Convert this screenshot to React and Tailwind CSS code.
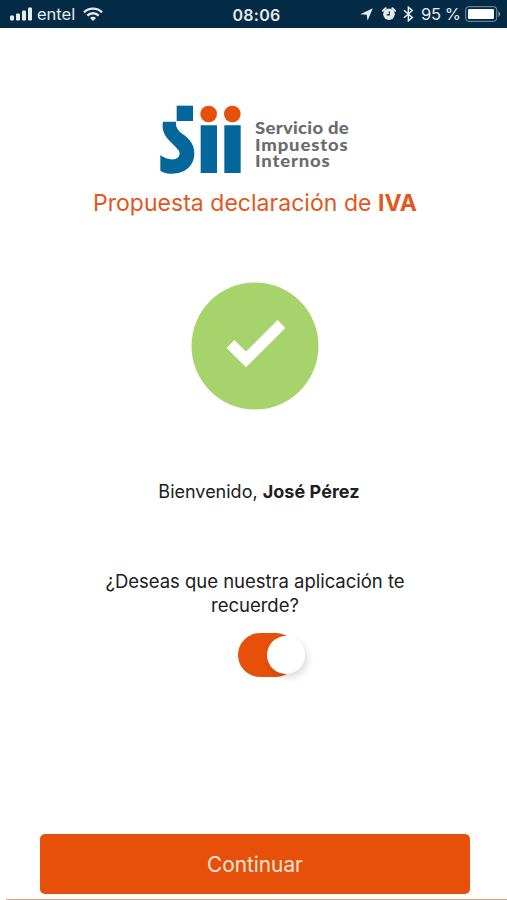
import React, { useState } from "react";

function StatusBar() {
  return (
    <header className="grid h-7 shrink-0 grid-cols-3 items-center bg-[#032b46] text-white/90">
      <div className="flex items-center pl-[10px]">
        <svg width="23" height="14" viewBox="0 0 23 14" fill="currentColor">
          <rect x="0" y="8.5" width="4" height="5" rx="1" />
          <rect x="6" y="6.5" width="4" height="7" rx="1" />
          <rect x="12" y="3.5" width="4" height="10" rx="1" />
          <rect x="18" y="0.5" width="4" height="13" rx="1" />
        </svg>
        <span className="mt-px ml-[4px] text-[16.5px] leading-none">entel</span>
        <svg className="ml-[8px]" width="20" height="15" viewBox="0 0 20 15" fill="none" stroke="currentColor" strokeWidth="2.4">
          <path d="M1 5.3C6 .4 14 .4 19 5.3" />
          <path d="M4.3 8.6c3.2-3.1 8.2-3.1 11.4 0" />
          <path d="M7 10.9c1.7-1.5 4.3-1.5 6 0L10 14z" fill="currentColor" stroke="none" />
        </svg>
      </div>

      <span className="mt-px pl-[6px] text-center text-[16px] font-semibold leading-none tracking-[0.3px]">08:06</span>

      <div className="flex items-center justify-end pr-[6px]">
        <svg width="13" height="13" viewBox="0 0 13 13" fill="currentColor">
          <path d="M12.8.3 7.6 12.7 6.7 6.8.3 6.2z" />
        </svg>
        <svg className="ml-[9px]" width="14" height="14" viewBox="0 0 14 14">
          <path d="M1 3.8 3.6 1.3M13 3.8l-2.6-2.5" stroke="currentColor" strokeWidth="2" strokeLinecap="round" />
          <circle cx="7" cy="7.2" r="5.8" fill="currentColor" />
          <path d="M7.3 4.3v3.6H4.7" fill="none" stroke="#032b46" strokeWidth="1.1" />
        </svg>
        <svg className="ml-[7px]" width="11" height="16" viewBox="0 0 11 16" fill="none" stroke="currentColor" strokeWidth="1.5">
          <path d="m1 4.3 8.3 7.2-3.9 3.3V1.2l3.9 3.3L1 11.7" />
        </svg>
        <span className="mt-px ml-[7px] whitespace-nowrap text-[16.5px] leading-none [word-spacing:-1px]">95 %</span>
        <svg className="ml-[4px]" width="36" height="16" viewBox="0 0 36 16">
          <rect x=".7" y=".7" width="31" height="14.6" rx="3" fill="none" stroke="currentColor" strokeOpacity=".55" />
          <rect x="3" y="3" width="26" height="10" rx="1.2" fill="white" />
          <path d="M33.4 5.2c2.2 1 2.2 4.6 0 5.6z" fill="currentColor" fillOpacity=".6" />
        </svg>
      </div>
    </header>
  );
}

function Logo() {
  return (
    <div className="flex h-[70px] w-[190px]">
      <svg className="shrink-0" width="82" height="70" viewBox="30 30 246 210">
        <g fill="#03679b">
          <path d="M80 32h49v46H80z" />
          <path d="M39 80h39c-1 16 4 25 20 37 20 14 35 31 35 58 0 42-34 64-73 61-11-1-21-4-29-9v-46c12 8 27 14 42 12 13-2 20-15 13-27C73 146 30 125 39 80z" />
          <path d="M152 91h49v143h-49zM223 91h49v143h-49z" />
        </g>
        <circle cx="176" cy="57" r="25" fill="#e6500b" />
        <circle cx="247" cy="57" r="25" fill="#e6500b" />
      </svg>
      <div className="mt-[15px] ml-[13px] flex origin-left scale-x-[1.12] flex-col whitespace-nowrap font-['Lato','Open_Sans',sans-serif] text-[16.5px] font-black leading-[16.7px] text-[#6b6c6f]">
        <span className="tracking-[0.25px]">Servicio de</span>
        <span className="tracking-[0.75px]">Impuestos</span>
        <span className="tracking-[0.75px]">Internos</span>
      </div>
    </div>
  );
}

export default function App() {
  const [remember, setRemember] = useState(true);

  return (
    <div className="flex h-[900px] w-[507px] flex-col overflow-hidden bg-white font-['Inter','Liberation_Sans',sans-serif] text-[#202022]">
      <StatusBar />

      <main className="flex flex-1 flex-col items-center">
        <div className="mt-[77px] ml-[3px]">
          <Logo />
        </div>
        <h1 className="mt-[12px] ml-[3px] whitespace-nowrap text-[23px] leading-8 tracking-[0.03px] text-[#e2571b]">
          Propuesta declaración de <b className="font-bold">IVA</b>
        </h1>

        <svg className="mt-[63px] ml-[3px]" width="128" height="128" viewBox="0 0 128 128">
          <circle cx="64" cy="64" r="63.5" fill="#a6d36c" />
          <path d="m39.5 62 15.5 15.5 35.5-35.5" fill="none" stroke="white" strokeWidth="11" />
        </svg>

        <p className="mt-[70px] ml-[11px] whitespace-nowrap text-[18px] leading-6">
          Bienvenido, <b className="font-bold tracking-[0.05px]">José Pérez</b>
        </p>
        <p className="mt-[65px] ml-[3px] text-center text-[18.5px] leading-6 tracking-[-0.02px]">
          ¿Deseas que nuestra aplicación te
          <br />
          recuerde?
        </p>

        {/* Remember me switch */}
        <button
          type="button"
          role="switch"
          aria-checked={remember}
          aria-label="Recordar"
          onClick={() => setRemember(!remember)}
          className={`mt-[16px] ml-[29px] flex h-[44px] w-[60px] items-center rounded-full ${
            remember ? "justify-end bg-[#e6500b]" : "justify-start bg-gray-300"
          }`}
        >
          <span className="-mr-[7px] size-[38px] rounded-full bg-white shadow-[3px_4px_7px_rgba(0,0,0,0.13)]" />
        </button>
      </main>

      <footer className="pr-[37px] pl-[40px]">
        <button type="button" className="h-[60px] w-full rounded-[5px] bg-[#e6500b] pt-[2px] text-[20.8px] text-[#fee5d4]">
          Continuar
        </button>
      </footer>
      <div className="mt-[5px] ml-[6px] h-px shrink-0 bg-[#dfa58b]" />
    </div>
  );
}
